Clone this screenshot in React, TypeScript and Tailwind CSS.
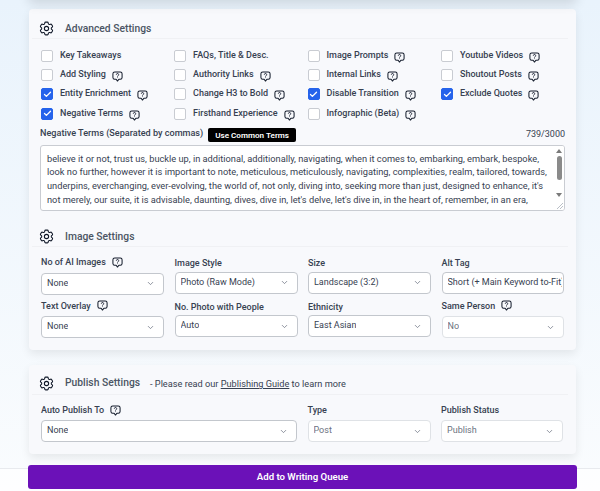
import React from "react";
import { HiOutlineCog6Tooth } from "react-icons/hi2";
import { ChevronDown, Check } from "lucide-react";

const Help = ({ className = "" }: { className?: string }) => (
  <svg viewBox="0 0 12 12" className={`w-[11px] h-[11px] shrink-0 text-gray-900 ${className}`} fill="none" stroke="currentColor">
    <path d="M3 1h6a2 2 0 0 1 2 2v4a2 2 0 0 1-2 2H7.5L6 11 4.5 9H3a2 2 0 0 1-2-2V3a2 2 0 0 1 2-2z" strokeWidth="1.1" strokeLinejoin="round" />
    <path d="M4.7 4a1.3 1.3 0 1 1 1.9 1.2c-.4.2-.6.4-.6.8" strokeWidth="1" />
    <path d="M6 7.1v.6" strokeWidth="1" />
  </svg>
);

const Cb = ({ label, on, help }: { label: string; on?: boolean; help?: boolean }) => (
  <div className="flex items-center h-[19.3px]">
    <span className={`w-3 h-3 rounded-[2px] flex items-center justify-center shrink-0 border ${on ? "bg-[#2563eb] border-[#2563eb]" : "bg-white border-[#c9ccd2]"}`}>
      {on && <Check className="w-[9px] h-[9px] text-white" strokeWidth={3.5} />}
    </span>
    <span className="ml-[7px] text-[9px] font-medium text-[#374151] whitespace-nowrap">{label}</span>
    {help && <Help className="ml-[6px] mt-[3px]" />}
  </div>
);

const Sel = ({ value, label, help, muted, shift, pub }: { value: string; label: string; help?: boolean; muted?: boolean; shift?: boolean; pub?: boolean }) => {
  const noChevron = value.startsWith("Short");
  return (
    <div className={`min-w-0 ${shift ? "-mt-[1px] -mb-[1px]" : ""}`}>
      <div className="flex items-center gap-[6px] h-[13px] text-[9px] font-medium text-[#374151] whitespace-nowrap">
        {label}
        {help && <Help className="-mt-[2px]" />}
      </div>
      <div className={`${pub ? "mt-[2.5px]" : shift ? "mt-[3px]" : "mt-[1px]"} h-[22px] flex items-center justify-between rounded-[4px] bg-white pl-[5px] ${noChevron ? "pr-[1px]" : "pr-[8px]"} border ${muted ? "border-[#dfe2e6] text-[#6b7280]" : "border-[#c3c7cd] text-[#374151]"}`}>
        <span className="text-[9px] whitespace-nowrap overflow-hidden">{value}</span>
        {!noChevron && <ChevronDown className="w-[9px] h-[9px] text-[#6b7280] shrink-0" />}
      </div>
    </div>
  );
};

const Head = ({ title, pad = "pt-[10px]", children }: { title: string; pad?: string; children?: React.ReactNode }) => (
  <div className={`flex items-center h-[30px] ${pad} border-b border-[#f0f1f4] ml-[3px] mr-[8px] pl-[7px]`}>
    <HiOutlineCog6Tooth className="w-[17px] h-[17px] text-gray-900 shrink-0 -ml-[1px]" />
    <span className="ml-[10px] text-[10.3px] font-medium text-[#4b5563]">{title}</span>
    {children}
  </div>
);

const TEXT = "believe it or not, trust us, buckle up, in additional, additionally, navigating, when it comes to, embarking, embark, bespoke, look no further, however it is important to note, meticulous, meticulously, navigating, complexities, realm, tailored, towards, underpins, everchanging, ever-evolving, the world of, not only, diving into, seeking more than just, designed to enhance, it's not merely, our suite, it is advisable, daunting, dives, dive in, let's delve, let's dive in, in the heart of, remember, in an era, vibrant, nestled, sit down with, the fact remains, look no more, tapestry, all things considered, at the end of the day, more or less, in conclusion";

export default function App() {
  return (
    <div className="relative w-[600px] h-[491px] overflow-hidden bg-gradient-to-b from-[#e9f3fc] to-[#fafcfe] font-['Roboto',sans-serif]">
      <div className="absolute left-[29px] w-[547px] -top-[20px] h-[20px] shadow-[0_4px_12px_rgba(0,0,0,0.12)]" />
      <div className="pl-[29px] pr-[24px] pt-[9px]">
        <section className="h-[341px] rounded-[4px] bg-[#f8f9fc] shadow-[0_4px_10px_rgba(0,0,0,0.08)]">
          <Head title="Advanced Settings" />
          <div className="pl-[12px] pr-[11px] pt-[7px] grid grid-cols-[133px_133.5px_133.5px_1fr]">
            <Cb label="Key Takeaways" />
            <Cb label="FAQs, Title & Desc." />
            <Cb label="Image Prompts" help />
            <Cb label="Youtube Videos" help />
            <Cb label="Add Styling" help />
            <Cb label="Authority Links" help />
            <Cb label="Internal Links" help />
            <Cb label="Shoutout Posts" help />
            <Cb label="Entity Enrichment" on help />
            <Cb label="Change H3 to Bold" help />
            <Cb label="Disable Transition" on help />
            <Cb label="Exclude Quotes" on help />
            <Cb label="Negative Terms" on help />
            <Cb label="Firsthand Experience" help />
            <Cb label="Infographic (Beta)" help />
          </div>
          <div className="pl-[11px] pr-[11px] mt-[3px]">
            <div className="flex items-center h-[16px]">
              <span className="text-[9.1px] font-medium text-[#374151]">Negative Terms (Separated by commas)</span>
              <span className="ml-[5px] mt-[2px] h-[14px] px-[7px] rounded-[2px] bg-black text-white text-[8.1px] font-semibold flex items-center">Use Common Terms</span>
              <span className="ml-auto mt-[1px] text-[9px] text-[#374151]">739/3000</span>
            </div>
            <div className="relative mt-[3px] h-[66px] rounded-[3px] border border-[#c9ccd2] bg-white overflow-hidden">
              <p className="pl-[6px] pr-[14px] pt-[5.5px] text-[9.25px] leading-[13.7px] text-[#374151]">{TEXT}</p>
              <div className="absolute right-0 top-0 bottom-0 w-[10px] bg-white flex flex-col items-center">
                <span className="mt-[3px] border-x-[3px] border-x-transparent border-b-[4px] border-b-[#7a7a7a]" />
                <span className="mt-[3px] w-[5px] h-[24px] rounded-full bg-[#8a8a8a]" />
                <span className="mt-[13px] border-x-[3px] border-x-transparent border-t-[4px] border-t-[#7a7a7a]" />
              </div>
              <svg viewBox="0 0 6 6" className="absolute right-[1px] bottom-[1px] w-[6px] h-[6px] text-[#9ca3af]" stroke="currentColor" strokeWidth="0.7">
                <path d="M0 6 6 0M3 6 6 3" />
              </svg>
            </div>
          </div>
          <div className="mt-[6px]"><Head title="Image Settings" /></div>
          <div className="pl-[12px] pr-[13px] pt-[10.5px] grid grid-cols-[123px_123px_123px_122px] gap-x-[10.5px] gap-y-[7.5px]">
            <Sel label="No of AI Images" help shift value="None" />
            <Sel label="Image Style" value="Photo (Raw Mode)" />
            <Sel label="Size" value="Landscape (3:2)" />
            <Sel label="Alt Tag" value="Short (+ Main Keyword to-Fit)" />
            <Sel label="Text Overlay" help shift value="None" />
            <Sel label="No. Photo with People" value="Auto" />
            <Sel label="Ethnicity" value="East Asian" />
            <Sel label="Same Person" help shift value="No" muted />
          </div>
        </section>
        <section className="mt-[15px] h-[89px] rounded-[4px] bg-[#f8f9fc] shadow-[0_4px_10px_rgba(0,0,0,0.08)]">
          <Head title="Publish Settings" pad="pt-[7px]">
            <span className="ml-[10px] mt-[2px] text-[9.2px] text-[#374151]">- Please read our <span className="underline">Publishing Guide</span> to learn more</span>
          </Head>
          <div className="pl-[12px] pr-[13px] pt-[9.5px] grid grid-cols-[256px_123px_122px] gap-x-[10.5px]">
            <Sel label="Auto Publish To" help pub value="None" />
            <Sel label="Type" pub value="Post" muted />
            <Sel label="Publish Status" pub value="Publish" muted />
          </div>
        </section>
      </div>
      <footer className="absolute left-0 right-0 bottom-0 h-[23px] bg-white/70 border-t border-[#e8eaee] pl-[28px] pr-[23px]">
        <button className="block -mt-[4px] w-full h-[24px] rounded-[3px] bg-[#6b11b8] text-white text-[9.6px] font-semibold">Add to Writing Queue</button>
      </footer>
    </div>
  );
}
